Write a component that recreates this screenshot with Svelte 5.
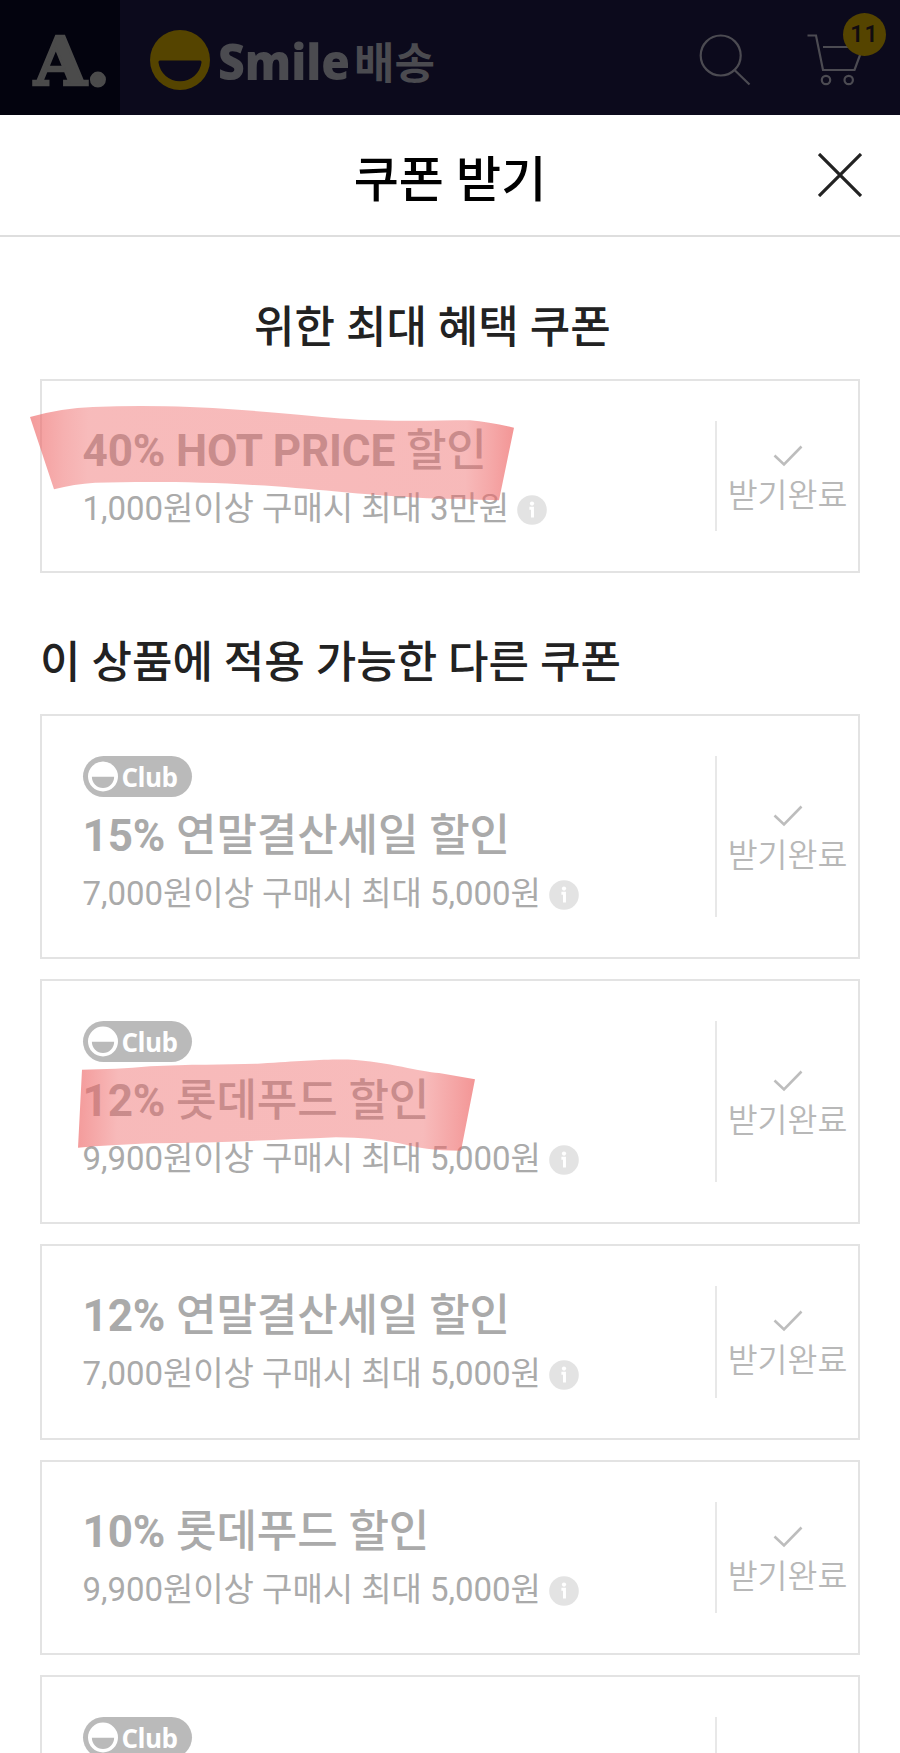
<script>
  const bestCoupons = [
    { rate: '40% HOT PRICE', name: '할인', condition: '1,000원이상 구매시 최대 3만원', club: false, marker: 'hot' }
  ];

  const otherCoupons = [
    { rate: '15%', name: '연말결산세일 할인', condition: '7,000원이상 구매시 최대 5,000원', club: true },
    { rate: '12%', name: '롯데푸드 할인', condition: '9,900원이상 구매시 최대 5,000원', club: true, marker: 'food' },
    { rate: '12%', name: '연말결산세일 할인', condition: '7,000원이상 구매시 최대 5,000원', club: false },
    { rate: '10%', name: '롯데푸드 할인', condition: '9,900원이상 구매시 최대 5,000원', club: false },
    { club: true }
  ];

  // Marker strokes, in card coordinates
  const markers = {
    hot: 'M-10 38 Q22 29 53 28 Q90 26.500 126 27.300 C197 29 260 36 300 39.500 C350 43 390 41.500 430 41.300 Q450 43 474 48.700 L459 121.300 Q420 120 387 119.300 C320 116 270 109 213 106 C160 102.500 100 102.500 55 103.700 Q34 105 14 110.300 Z',
    food: 'M42 90.700 Q75 90.500 110 87.300 C150 85 190 86 221 84.500 C260 82 280 80.200 308 80.500 C350 83 380 93 399 94 L435 100.300 L421 171.700 Q400 171.500 387 169.700 C360 166 350 159 296 158.300 C230 161 170 164.500 110 164.300 Q70 166 38 168.700 Z'
  };
</script>

{#snippet coupon(item)}
  <li class="card" class:tall={item.club}>
    <div class="info">
      {#if item.club}
        <span class="club">
          <svg width="30" height="31" viewBox="0 0 31 31">
            <circle cx="15.500" cy="15.500" r="15.500" fill="#fff" />
            <path d="M4 15.800h23a11.500 11.500 0 0 1-23 0z" fill="#bababa" />
          </svg>
          Club
        </span>
      {/if}
      {#if item.rate}
        <h3><b>{item.rate}</b> {item.name}</h3>
        <p>
          {item.condition}
          <svg class="tip" width="30" height="30" viewBox="0 0 31 31">
            <circle cx="15.500" cy="15.500" r="15.300" fill="#e3e3e3" />
            <circle cx="15.500" cy="8.800" r="2.200" fill="#fff" />
            <path d="M12.800 13.700h3.200v9.500" fill="none" stroke="#fff" stroke-width="3" />
          </svg>
        </p>
      {/if}
    </div>
    <div class="state">
      {#if item.rate}
        <svg width="30" height="22" viewBox="0 0 30 22">
          <path d="M1.500 10.500l9.500 9L28.500 1.500" fill="none" stroke="#bdbdbd" stroke-width="2.600" />
        </svg>
        <span>받기완료</span>
      {/if}
    </div>
    {#if item.marker}
      <svg class="marker" width="820" height="245" viewBox="0 0 820 245">
        <path d={markers[item.marker]} fill="url(#ink-{item.marker})" />
      </svg>
    {/if}
  </li>
{/snippet}

<svg class="defs" width="0" height="0">
  <defs>
    <linearGradient id="ink-hot" gradientUnits="userSpaceOnUse" x1="-10" y1="76" x2="474" y2="84">
      <stop offset="0" stop-color="#ee6868" stop-opacity=".66" />
      <stop offset=".07" stop-color="#ee6868" stop-opacity=".52" />
      <stop offset=".12" stop-color="#ee6868" stop-opacity=".45" />
      <stop offset=".9" stop-color="#ee6868" stop-opacity=".46" />
      <stop offset=".95" stop-color="#ee6868" stop-opacity=".57" />
      <stop offset="1" stop-color="#ee6868" stop-opacity=".7" />
    </linearGradient>
    <linearGradient id="ink-food" gradientUnits="userSpaceOnUse" x1="38" y1="128" x2="435" y2="136">
      <stop offset="0" stop-color="#ee6868" stop-opacity=".66" />
      <stop offset=".1" stop-color="#ee6868" stop-opacity=".46" />
      <stop offset=".87" stop-color="#ee6868" stop-opacity=".45" />
      <stop offset=".95" stop-color="#ee6868" stop-opacity=".6" />
      <stop offset="1" stop-color="#ee6868" stop-opacity=".7" />
    </linearGradient>
  </defs>
</svg>

<div class="page">
  <header class="top">
    <div class="brand">
      <svg width="120" height="115" viewBox="0 0 120 115">
        <text x="34" y="85" class="brand-a">A<tspan class="brand-dot" dx="-1">.</tspan></text>
      </svg>
    </div>
    <div class="logo">
      <svg width="60" height="60" viewBox="0 0 60 60">
        <circle cx="30" cy="30" r="30" fill="#554400" />
        <path d="M10 30.500h40q1.800 0 1.500 2a21.700 21.700 0 0 1-43 0q-.3-2 1.500-2z" fill="#0c0a1c" />
      </svg>
      <svg width="240" height="80" viewBox="0 0 240 80">
        <text x="8" y="59.500" class="smile" textLength="132" lengthAdjust="spacingAndGlyphs">Smile</text>
        <text x="144" y="59" class="baesong" textLength="81" lengthAdjust="spacingAndGlyphs">배송</text>
      </svg>
    </div>
    <div class="tools">
      <svg width="52" height="52" viewBox="0 0 52 52" fill="none" stroke="#4c4b52" stroke-width="2.200">
        <circle cx="21.700" cy="21.500" r="20" />
        <path d="M35.500 36L50.500 50.500" />
      </svg>
      <div class="cart">
        <svg width="60" height="52" viewBox="0 0 60 52" fill="none" stroke="#4c4b52" stroke-width="2.200">
          <path d="M.5 1.500h8.500l7 34.500h31.500l8.500-23H16" />
          <circle cx="19" cy="46" r="4.200" />
          <circle cx="41.700" cy="46" r="4.200" />
        </svg>
        <span class="count">11</span>
      </div>
    </div>
  </header>

  <main class="sheet">
    <div class="bar">
      <h1>쿠폰 받기</h1>
      <button class="close" aria-label="닫기">
        <svg width="44" height="44" viewBox="0 0 44 44">
          <path d="M1 1l42 42M43 1L1 43" stroke="#222" stroke-width="3.200" />
        </svg>
      </button>
    </div>

    <section class="best">
      <h2>위한 최대 혜택 쿠폰</h2>
      <ul>
        {#each bestCoupons as item}
          {@render coupon(item)}
        {/each}
      </ul>
    </section>

    <section>
      <h2>이 상품에 적용 가능한 다른 쿠폰</h2>
      <ul>
        {#each otherCoupons as item}
          {@render coupon(item)}
        {/each}
      </ul>
    </section>
  </main>
</div>

<style>
  :global(body) {
    margin: 0;
    background: #fff;
  }

  .page {
    width: 900px;
    height: 1753px;
    overflow: hidden;
    font-family: Roboto, 'Noto Sans CJK KR', sans-serif;
    color: #222;
  }

  .defs {
    position: absolute;
  }

  svg {
    display: block;
    flex: none;
  }

  h1, h2, h3, p, ul {
    margin: 0;
    padding: 0;
    font-weight: 500;
  }

  .top {
    display: flex;
    height: 115px;
    background: #0c0a1c;
  }

  .brand {
    width: 120px;
    background: #03030e;
  }

  .brand-a {
    font: bold 68px 'DejaVu Serif', serif;
    fill: #4b4b4b;
    stroke: #4b4b4b;
    stroke-width: 2.5px;
  }

  .brand-dot {
    font-size: 70px;
    stroke-width: 3px;
  }

  .logo {
    display: flex;
    align-items: center;
    padding: 5px 0 0 30px;
  }

  .smile {
    font: 800 50px 'Open Sans', sans-serif;
    fill: #4b4b50;
  }

  .baesong {
    font: 700 43px 'Noto Sans CJK KR', sans-serif;
    fill: #4b4b50;
  }

  .tools {
    display: flex;
    align-items: flex-start;
    gap: 56px;
    margin-left: auto;
    padding: 34px 33px 0 0;
  }

  .cart {
    position: relative;
  }

  .count {
    position: absolute;
    top: -21px;
    left: 36px;
    width: 43px;
    height: 43px;
    border-radius: 50%;
    background: #554400;
    color: #110c10;
    font-size: 23px;
    font-weight: 600;
    line-height: 43px;
    letter-spacing: 1px;
    text-align: center;
  }

  .bar {
    position: relative;
    height: 120px;
    border-bottom: 2px solid #dedede;
  }

  h1 {
    font-size: 49px;
    line-height: 132px;
    text-align: center;
    color: #000;
  }

  .close {
    position: absolute;
    top: 38px;
    right: 38px;
    padding: 0;
    border: 0;
    background: none;
  }

  section {
    padding: 0 40px;
  }

  h2 {
    height: 77px;
    padding-top: 64px;
    font-size: 44px;
    line-height: 52px;
    white-space: nowrap;
  }

  .best h2 {
    padding-top: 65px;
    padding-left: 214px;
  }

  ul {
    display: flex;
    flex-direction: column;
    gap: 20px;
    list-style: none;
  }

  .card {
    position: relative;
    display: flex;
    box-sizing: border-box;
    height: 195.500px;
    padding: 40px 0;
    border: 2px solid #e3e3e3;
  }

  .best .card {
    height: 194px;
  }

  .card.tall {
    height: 245px;
  }

  .info {
    flex: 1;
    padding-left: 40.500px;
    white-space: nowrap;
    color: #aaa;
  }

  .club {
    display: flex;
    align-items: center;
    gap: 4px;
    box-sizing: border-box;
    width: 109px;
    height: 41px;
    margin-bottom: 9px;
    padding-left: 5px;
    border-radius: 21px;
    background: #bababa;
    color: #fff;
    font-family: 'Open Sans', sans-serif;
    font-size: 26px;
    font-weight: 700;
    letter-spacing: -0.5px;
  }

  h3 {
    height: 62px;
    font-size: 44px;
    line-height: 61px;
    letter-spacing: -0.1px;
  }

  h3 b {
    font-weight: 700;
  }

  p {
    display: flex;
    align-items: center;
    gap: 8px;
    height: 51px;
    font-size: 33px;
    font-weight: 400;
    line-height: 51px;
    letter-spacing: -0.04px;
  }

  .tip {
    margin-top: 3px;
  }

  .state {
    display: flex;
    flex-direction: column;
    align-items: center;
    justify-content: center;
    gap: 9px;
    width: 141px;
    border-left: 2px solid #e8e8e8;
    color: #b8b8b8;
    font-size: 32.500px;
    font-weight: 350;
    line-height: 40px;
  }

  .state svg {
    margin-top: 8px;
  }

  .marker {
    position: absolute;
    top: -2px;
    left: -2px;
    overflow: visible;
  }
</style>
